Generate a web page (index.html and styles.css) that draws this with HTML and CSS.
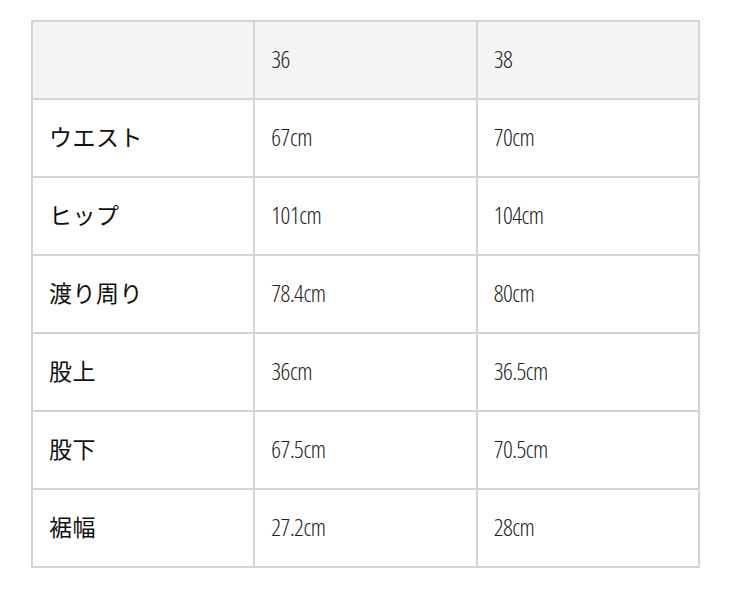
FILE: index.html
```html
<!DOCTYPE html>
<html lang="ja">
<head>
<meta charset="utf-8">
<link rel="stylesheet" href="styles.css">
</head>
<body>
<div class="wrap">
<table class="size-table">
  <tr class="head">
    <th class="label"></th>
    <th class="num">36</th>
    <th class="num">38</th>
  </tr>
  <tr><td class="label">ウエスト</td><td class="num">67cm</td><td class="num">70cm</td></tr>
  <tr><td class="label">ヒップ</td><td class="num">101cm</td><td class="num">104cm</td></tr>
  <tr><td class="label">渡り周り</td><td class="num">78.4cm</td><td class="num">80cm</td></tr>
  <tr><td class="label">股上</td><td class="num">36cm</td><td class="num">36.5cm</td></tr>
  <tr><td class="label">股下</td><td class="num">67.5cm</td><td class="num">70.5cm</td></tr>
  <tr><td class="label">裾幅</td><td class="num">27.2cm</td><td class="num">28cm</td></tr>
</table>
</div>
</body>
</html>
```
FILE: styles.css
```css
html, body {
  margin: 0;
  padding: 0;
  background: #ffffff;
}
.wrap {
  padding: 20px 0 0 31px;
}
.size-table {
  border-collapse: collapse;
  width: 669px;
  table-layout: fixed;
  color: #222222;
}
.size-table th,
.size-table td {
  border: 2px solid #d4d4d4;
  height: 72px;
  padding: 0 0 4px 16px;
  text-align: left;
  vertical-align: middle;
  font-weight: 400;
}
.size-table .head th {
  background: #f4f4f4;
}
.size-table .label {
  font-family: "Noto Sans CJK JP", sans-serif;
  font-size: 23px;
  letter-spacing: 0.5px;
  color: #111111;
}
.size-table .num {
  font-family: "Open Sans", "Noto Sans CJK JP", sans-serif;
  font-stretch: 75%;
  font-weight: 300;
  font-size: 24px;
  letter-spacing: -0.5px;
}
```
